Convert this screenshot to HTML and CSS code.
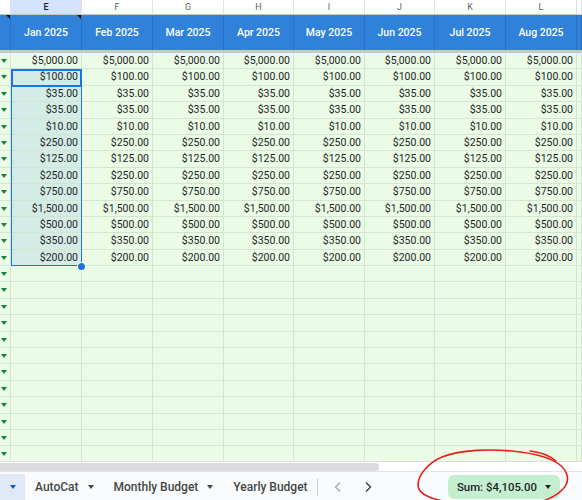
FILE: index.html
```html
<!DOCTYPE html>
<html>
    <head>
        <title>Budget</title>
        <meta http-equiv="Content-Type" content="text/html; charset=UTF-8">
        <link rel="stylesheet" href="styles.css">
    </head>
    <body>
        <div class="sheet">
            <div class="grid" id="grid">
                <div class="selection"></div>
                <div class="active-cell"></div>
                <div class="fill-handle"></div>
            </div>
            <div class="hscroll">
                <div class="thumb"></div>
                <div class="track"></div>
            </div>
            <div class="tabs">
                <div class="tab current"><span class="caret blue"></span></div>
                <div class="tab">AutoCat <span class="caret"></span></div>
                <div class="tab">Monthly Budget <span class="caret"></span></div>
                <div class="tab">Yearly Budget</div>
                <div class="divider"></div>
                <div class="nav">
                    <svg width="8" height="12" viewBox="0 0 8 12"><polyline points="6,1.5 1.5,6 6,10.5" fill="none" stroke="#a8abb0" stroke-width="1.4"/></svg>
                    <svg width="8" height="12" viewBox="0 0 8 12"><polyline points="2,1.5 6.5,6 2,10.5" fill="none" stroke="#3c4043" stroke-width="1.4"/></svg>
                </div>
                <div class="sum">Sum: $4,105.00 <span class="caret"></span></div>
            </div>

            <!-- hand drawn circle around the sum -->
            <svg class="scribble" width="172" height="56" viewBox="0 0 172 56">
                <path d="M 133 56 C 150 50, 160 40, 157 30 C 154 18, 136 10, 110 7 C 80 3, 50 5, 32 12 C 18 18, 8 30, 8 40 C 8 48, 18 53, 33 56" fill="none" stroke="#e3201b" stroke-width="1.6" stroke-linecap="round"/>
                <path d="M 120 6 C 130 7, 140 11, 146 16" fill="none" stroke="#e3201b" stroke-width="1.4" stroke-linecap="round"/>
            </svg>
        </div>

        <script>
            // only E..L are fully visible, the edge columns show no letter
            var letters = ['', 'E', 'F', 'G', 'H', 'I', 'J', 'K', 'L', ''];
            var months = ['', 'Jan 2025', 'Feb 2025', 'Mar 2025', 'Apr 2025', 'May 2025', 'Jun 2025', 'Jul 2025', 'Aug 2025', ''];
            var values = ['$5,000.00', '$100.00', '$35.00', '$35.00', '$10.00', '$250.00', '$125.00',
                          '$250.00', '$750.00', '$1,500.00', '$500.00', '$350.00', '$200.00'];
            var emptyRows = 12;
            var grid = document.getElementById('grid');

            function cell(cls, text) {
                var div = document.createElement('div');
                div.className = cls;
                if (text) div.textContent = text;
                grid.appendChild(div);
                return div;
            }

            // column letters
            letters.forEach(function(l, i) {
                cell('letter' + (i == 1 ? ' picked' : ''), l);
            });

            // blue month header
            months.forEach(function(m, i) {
                cell('head' + (i < 2 ? ' note' : ''), m);
            });

            cell('freeze');

            // amounts, the same value in every month
            var total = values.length + emptyRows;
            for (var r = 0; r < total; r++) {
                cell('cell drop');
                for (var c = 1; c < 9; c++) {
                    var v = r < values.length ? values[r] : '';
                    var sel = (c == 1 && r > 0 && r < values.length) ? ' sel' : '';
                    cell('cell' + sel, v);
                }
                cell('cell');
            }
        </script>
    </body>
</html>
```

FILE: styles.css
```css
body {
    padding: 0;
    margin: 0;
    font-family: Roboto, "Liberation Sans", Arial, sans-serif;
    overflow: hidden;
}

.sheet {
    position: relative;
    width: 582px;
    height: 500px;
    overflow: hidden;
    background-color: #fff;
}

.grid {
    position: relative;
    height: 461px;
    overflow: hidden;
    display: grid;
    grid-template-columns: 11px 71px 71px 71px 70px 71px 70px 71px 71px 5px;
    grid-template-rows: 15px 35px 3px;
    grid-auto-rows: 16.4px;
    background-color: #eafbe6;
}

.grid > div {
    box-sizing: border-box;
}

.letter {
    background-color: #fff;
    border-right: 1px solid #e1e1e1;
    border-bottom: 1px solid #c7c7c7;
    color: #5f6368;
    font-size: 9px;
    line-height: 14px;
    text-align: center;
}

.letter.picked {
    background-color: #d3e3fd;
    color: #1f1f1f;
    font-weight: 500;
}

.head {
    position: relative;
    background-color: #2f81d9;
    border-right: 1px solid #2a70c2;
    color: #fff;
    font-size: 10.5px;
    font-weight: 500;
    display: flex;
    align-items: center;
    justify-content: center;
}

/* little black corner of a cell note */
.head.note::after {
    content: "";
    position: absolute;
    top: 0;
    right: 0;
    border-top: 4px solid #111;
    border-left: 4px solid transparent;
}

.freeze {
    grid-column: 1 / -1;
    background-color: #c6c9c6;
}

.cell {
    border-right: 1px solid #d4e6d0;
    border-bottom: 1px solid #d4e6d0;
    color: #1f1f1f;
    font-size: 10.5px;
    line-height: 16.4px;
    text-align: right;
    padding-right: 3px;
    white-space: nowrap;
}

.cell.sel {
    background-color: #d4ece6;
}

.cell.drop {
    position: relative;
}

.cell.drop::after {
    content: "";
    position: absolute;
    left: 1px;
    top: 6px;
    border-top: 4px solid #188038;
    border-left: 3px solid transparent;
    border-right: 3px solid transparent;
}

.selection {
    position: absolute;
    left: 11px;
    top: 69.4px;
    width: 71px;
    height: 197px;
    border: 1px solid #1a73e8;
    box-sizing: border-box;
    pointer-events: none;
}

.active-cell {
    position: absolute;
    left: 11px;
    top: 69.4px;
    width: 71px;
    height: 17.4px;
    border: 2px solid #1a73e8;
    box-sizing: border-box;
}

.fill-handle {
    position: absolute;
    left: 78px;
    top: 263px;
    width: 7px;
    height: 7px;
    border-radius: 50%;
    background-color: #1a73e8;
    box-shadow: 0 0 0 1px #fff;
}

.hscroll {
    height: 10px;
    display: flex;
    align-items: center;
    border-top: 1px solid #dadce0;
    box-sizing: border-box;
    background-color: #fff;
}

.hscroll .thumb {
    width: 379px;
    height: 8px;
    border-radius: 0 4px 4px 0;
    background-color: #dadce0;
}

.hscroll .track {
    flex: 1;
}

.tabs {
    height: 29px;
    display: flex;
    align-items: center;
    padding-top: 2px;
    background-color: #f9fbfd;
    border-top: 1px solid #e3e3e3;
    box-sizing: border-box;
    font-size: 12px;
    font-weight: 500;
    color: #444746;
}

.tab {
    height: 100%;
    display: flex;
    align-items: center;
    gap: 9px;
    padding: 0 10px;
    white-space: nowrap;
}

.tab.current {
    width: 25px;
    box-sizing: border-box;
    padding: 0 0 0 10px;
    background-color: #e1e9f7;
}

.caret {
    display: inline-block;
    border-top: 4px solid #444746;
    border-left: 3.5px solid transparent;
    border-right: 3.5px solid transparent;
}

.caret.blue {
    border-top-color: #0b57d0;
}

.divider {
    width: 1px;
    height: 17px;
    margin-left: -1px;
    background-color: #c4c7c5;
}

.nav {
    display: flex;
    align-items: center;
    gap: 22px;
    margin-left: 16px;
}

.sum {
    margin-left: auto;
    margin-right: 22px;
    height: 24px;
    padding: 0 9px;
    display: flex;
    align-items: center;
    gap: 8px;
    border-radius: 6px;
    background-color: #c4eed0;
    color: #1f1f1f;
    font-size: 11.4px;
}

.sum .caret {
    border-top-color: #1f1f1f;
}

.scribble {
    position: absolute;
    left: 410px;
    top: 445px;
}
```
